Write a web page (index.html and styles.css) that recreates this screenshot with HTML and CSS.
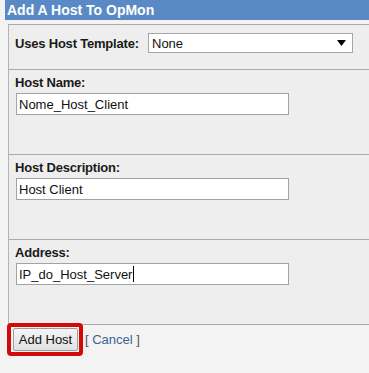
FILE: index.html
```html
<!DOCTYPE html>
<html>
<head>
    <title>Add A Host To OpMon</title>
    <link rel="stylesheet" href="styles.css">
</head>
<body>
    <div class="page">
        <div class="title">Add A Host To OpMon</div>

        <form class="host-form">
            <div class="panel">
                <div class="row row-inline">
                    <label class="label label-inline" for="template">Uses Host Template:</label>
                    <span class="select-wrap">
                        <select id="template" class="select">
                            <option>None</option>
                        </select>
                        <svg class="arrow" width="9" height="6" viewBox="0 0 9 6"><path d="M0 0H9L4.5 6Z" fill="#000"/></svg>
                    </span>
                </div>

                <div class="row">
                    <label class="label" for="hostname">Host Name:</label>
                    <input type="text" id="hostname" class="field" value="Nome_Host_Client">
                </div>

                <div class="row">
                    <label class="label" for="hostdesc">Host Description:</label>
                    <input type="text" id="hostdesc" class="field" value="Host Client">
                </div>

                <div class="row">
                    <label class="label" for="address">Address:</label>
                    <span class="field-wrap">
                        <input type="text" id="address" class="field" value="IP_do_Host_Server">
                        <span class="caret"></span>
                    </span>
                </div>
            </div>

            <div class="actions">
                <span class="highlight">
                    <button type="submit" class="btn">Add Host</button>
                </span>
                <span class="cancel">[ <a href="#">Cancel</a> ]</span>
            </div>
        </form>
    </div>
</body>
</html>
```

FILE: styles.css
```css
html, body {
    margin: 0;
    padding: 0;
}
body {
    background-color: #f3f3f3;
    font-family: "Liberation Sans", Arial, sans-serif;
    font-size: 13px;
    color: #111;
    overflow: hidden;
}
.page {
    padding-left: 5px;
}
.title {
    background-color: #5a8ac5;
    color: white;
    font-weight: bold;
    font-size: 14px;
    height: 20px;
    line-height: 21px;
    padding-left: 2px;
}
.host-form {
    margin: 0;
    padding-top: 4px;
}
.panel {
    margin-left: 3px;
    background-color: #eeeeee;
    border-top: 1px solid #a9a9a9;
    border-left: 1px solid #b4b4b4;
}
.row {
    border-bottom: 1px solid #a9a9a9;
    padding: 5px 0 39px 6px;
}
.row-inline {
    display: flex;
    align-items: center;
    padding-top: 8px;
    padding-bottom: 16px;
}
.label {
    display: block;
    font-weight: bold;
    line-height: 15px;
    margin-bottom: 3px;
    color: #1a1a1a;
    letter-spacing: -0.2px;
}
.label-inline {
    width: 133px;
    margin-bottom: 0;
}
.select-wrap {
    position: relative;
    display: block;
}
.select {
    appearance: none;
    -webkit-appearance: none;
    display: block;
    width: 205px;
    height: 20px;
    margin: 0;
    padding: 0 0 0 3px;
    border: 1px solid #a6a6a6;
    border-radius: 0;
    background-color: white;
    font-family: "Liberation Sans", Arial, sans-serif;
    font-size: 13px;
    color: #111;
}
.arrow {
    position: absolute;
    right: 7px;
    top: 7px;
}
.field-wrap {
    position: relative;
    display: block;
}
.field {
    display: block;
    box-sizing: border-box;
    width: 273px;
    height: 22px;
    margin: 0 0 0 1px;
    padding: 0 2px;
    border: 1px solid #a3a3a3;
    background-color: white;
    font-family: "Liberation Sans", Arial, sans-serif;
    font-size: 13px;
    color: #111;
}
.caret {
    position: absolute;
    left: 118px;
    top: 3px;
    width: 1px;
    height: 16px;
    background-color: #000;
}
.actions {
    display: flex;
    align-items: center;
    margin-top: -2px;
    padding-left: 2px;
}
.highlight {
    display: block;
    border: 4px solid #d20a0a;
    border-radius: 4px;
    padding: 1px 1px 1px 2px;
}
.btn {
    display: block;
    width: 65px;
    height: 23px;
    margin: 0;
    padding: 0;
    border: 1px solid #9c9c9c;
    border-radius: 2px;
    background: linear-gradient(#f4f4f4, #e2e2e2);
    font-family: "Liberation Sans", Arial, sans-serif;
    font-size: 13px;
    color: #111;
}
.cancel {
    margin-left: 2px;
    color: #555;
}
.cancel a {
    color: #3d6399;
    text-decoration: none;
}
```
